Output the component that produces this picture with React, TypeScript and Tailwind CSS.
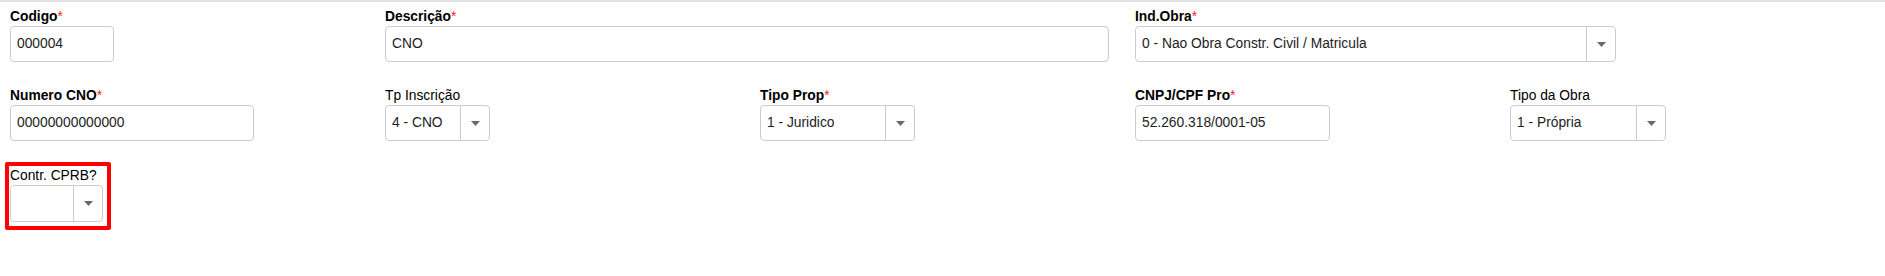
const font = { fontFamily: '"Liberation Sans", Arial, sans-serif' };

const Label = ({ text, required, bold }: { text: string; required?: boolean; bold?: boolean }) => (
  <div className={`h-4 leading-4 text-[13.8px] text-black whitespace-nowrap ${bold ? 'font-bold' : ''}`}>
    {text}
    {required && <span className="text-[#ff1a1a] font-normal">*</span>}
  </div>
);

const TextBox = ({ value, width }: { value: string; width: string }) => (
  <div
    className={`${width} mt-px h-9 flex items-center px-[6px] border border-[#cccccc] rounded-[4px] bg-white text-[13.8px] text-[#222]`}
  >
    {value}
  </div>
);

const Caret = () => (
  <svg width="9" height="5" viewBox="0 0 9 5" className="fill-[#666a70]">
    <polygon points="0,0 9,0 4.5,5" />
  </svg>
);

const SelectBox = ({ value, width, tall }: { value: string; width: string; tall?: boolean }) => (
  <div
    className={`${width} mt-px ${tall ? 'h-[37px]' : 'h-9'} flex border border-[#cccccc] rounded-[4px] bg-white text-[13.8px] text-[#222]`}
  >
    <div className="flex-1 flex items-center px-[6px] whitespace-nowrap overflow-hidden">{value}</div>
    <div className="w-[29px] flex items-center justify-center border-l border-[#cccccc]">
      <Caret />
    </div>
  </div>
);

const Field = ({ children, className = '' }: { children: React.ReactNode; className?: string }) => (
  <div className={className}>{children}</div>
);

export default function App() {
  return (
    <div className="w-[1885px] h-[276px] bg-white border-t-2 border-[#e2e2e2]" style={font}>
      <div className="grid grid-cols-[375px_375px_375px_375px_375px] pl-[10px] pt-[7px]">
        <Field>
          <Label text="Codigo" required bold />
          <TextBox value="000004" width="w-[104px]" />
        </Field>
        <Field className="col-span-2">
          <Label text="Descrição" required bold />
          <TextBox value="CNO" width="w-[724px]" />
        </Field>
        <Field className="col-span-2">
          <Label text="Ind.Obra" required bold />
          <SelectBox value="0 - Nao Obra Constr. Civil / Matricula" width="w-[481px]" />
        </Field>
      </div>

      <div className="grid grid-cols-[375px_375px_375px_375px_375px] pl-[10px] mt-[26px]">
        <Field>
          <Label text="Numero CNO" required bold />
          <TextBox value="00000000000000" width="w-[244px]" />
        </Field>
        <Field>
          <Label text="Tp Inscrição" />
          <SelectBox value="4 - CNO" width="w-[105px]" />
        </Field>
        <Field>
          <Label text="Tipo Prop" required bold />
          <SelectBox value="1 - Juridico" width="w-[155px]" />
        </Field>
        <Field>
          <Label text="CNPJ/CPF Pro" required bold />
          <TextBox value="52.260.318/0001-05" width="w-[195px]" />
        </Field>
        <Field>
          <Label text="Tipo da Obra" />
          <SelectBox value="1 - Própria" width="w-[156px]" />
        </Field>
      </div>

      <div className="flex pl-[5px] mt-[21px]">
        <div className="border-4 border-[#ff0000] rounded-[2px] pl-px pr-[4px] pt-[2px] pb-[4px]">
          <Label text="Contr. CPRB?" />
          <SelectBox value="" width="w-[93px]" tall />
        </div>
      </div>
    </div>
  );
}
